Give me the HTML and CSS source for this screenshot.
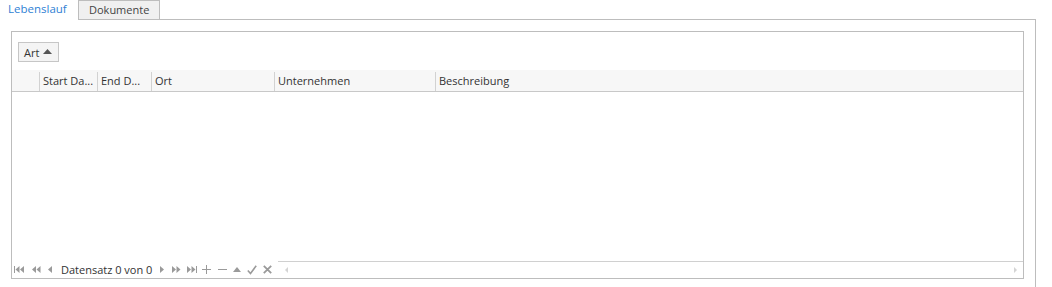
FILE: index.html
```html
<!DOCTYPE html>
<html>
<head>
<meta charset="utf-8">
<link rel="stylesheet" href="styles.css">
</head>
<body>
<div class="tabstrip">
  <div class="tab tab-active">Lebenslauf</div>
  <div class="tab tab-idle">Dokumente</div>
  <div class="tab-fill"></div>
</div>
<div class="panel">
  <div class="grid">
    <div class="grouppanel">
      <div class="groupbtn">Art <svg class="sortup" width="9" height="5" viewBox="0 0 9 5"><path d="M0 5 L4.5 0 L9 5 Z" fill="#555"/></svg></div>
    </div>
    <div class="header">
      <div class="col col-ind"></div>
      <div class="col col-start">Start Da...</div>
      <div class="col col-end">End D...</div>
      <div class="col col-ort">Ort</div>
      <div class="col col-unt">Unternehmen</div>
      <div class="col col-desc">Beschreibung</div>
    </div>
    <div class="body"></div>
    <div class="footer">
      <div class="nav">
        <svg class="ic ic-first" width="11" height="7" viewBox="0 0 11 7"><rect x="0" y="0" width="1" height="7" fill="#9a9a9a"/><path d="M1.5 3.5 L5.5 0 L5.5 7 Z M6 3.5 L10 0 L10 7 Z" fill="#9a9a9a"/></svg>
        <svg class="ic ic-prevpage" width="9" height="7" viewBox="0 0 9 7"><path d="M0 3.5 L4 0 L4 7 Z M4.5 3.5 L8.5 0 L8.5 7 Z" fill="#9a9a9a"/></svg>
        <svg class="ic ic-prev" width="4" height="7" viewBox="0 0 4 7"><path d="M0 3.5 L4 0 L4 7 Z" fill="#9a9a9a"/></svg>
        <span class="navtext">Datensatz 0 von 0</span>
        <svg class="ic ic-next" width="4" height="7" viewBox="0 0 4 7"><path d="M4 3.5 L0 0 L0 7 Z" fill="#9a9a9a"/></svg>
        <svg class="ic ic-nextpage" width="9" height="7" viewBox="0 0 9 7"><path d="M4 3.5 L0 0 L0 7 Z M8.5 3.5 L4.5 0 L4.5 7 Z" fill="#9a9a9a"/></svg>
        <svg class="ic ic-last" width="11" height="7" viewBox="0 0 11 7"><path d="M4 3.5 L0 0 L0 7 Z M8.5 3.5 L4.5 0 L4.5 7 Z" fill="#9a9a9a"/><rect x="9" y="0" width="1" height="7" fill="#9a9a9a"/></svg>
        <svg class="ic ic-plus" width="9" height="9" viewBox="0 0 9 9"><path d="M4.5 0 V9 M0 4.5 H9" stroke="#9a9a9a" stroke-width="1"/></svg>
        <svg class="ic ic-minus" width="9" height="9" viewBox="0 0 9 9"><path d="M0 4.5 H9" stroke="#9a9a9a" stroke-width="1"/></svg>
        <svg class="ic ic-up" width="8" height="5" viewBox="0 0 8 5"><path d="M0 5 L4 0 L8 5 Z" fill="#9a9a9a"/></svg>
        <svg class="ic ic-check" width="10" height="10" viewBox="0 0 10 10"><path d="M0.8 5.5 L3.5 8.5 L9.2 0.8" stroke="#9a9a9a" stroke-width="1.6" fill="none"/></svg>
        <svg class="ic ic-cancel" width="9" height="9" viewBox="0 0 9 9"><path d="M0.8 0.8 L8.2 8.2 M8.2 0.8 L0.8 8.2" stroke="#9a9a9a" stroke-width="1.8"/></svg>
      </div>
      <div class="hscroll">
        <svg class="sarrow" width="3" height="6" viewBox="0 0 3 6"><path d="M0 3 L3 0 L3 6 Z" fill="#d4d4d4"/></svg>
        <svg class="sarrow" width="3" height="6" viewBox="0 0 3 6"><path d="M3 3 L0 0 L0 6 Z" fill="#d4d4d4"/></svg>
      </div>
    </div>
  </div>
</div>
</body>
</html>
```

FILE: styles.css
```css
html, body {
  margin: 0;
  padding: 0;
  background: #ffffff;
}
body {
  font-family: "Open Sans", "Noto Sans", "Liberation Sans", sans-serif;
  font-size: 11px;
  color: #333333;
  width: 1052px;
  height: 287px;
  overflow: hidden;
}
.tabstrip {
  display: flex;
  width: 1036px;
  height: 20px;
}
.tab {
  box-sizing: border-box;
  height: 20px;
  line-height: 18px;
}
.tab-active {
  width: 78px;
  padding-left: 8px;
  color: #2f7fd4;
  font-size: 11.5px;
}
.tab-idle {
  width: 82px;
  padding-left: 10px;
  border: 1px solid #bdbdbd;
  background: #f0f0f0;
  color: #444444;
}
.tab-fill {
  flex: 1;
  border-bottom: 1px solid #bdbdbd;
}
.panel {
  box-sizing: border-box;
  width: 1036px;
  height: 267px;
  border-right: 1px solid #bdbdbd;
  padding: 11px 11px 0 11px;
}
.grid {
  box-sizing: border-box;
  width: 1013px;
  height: 248px;
  border: 1px solid #bdbdbd;
  display: flex;
  flex-direction: column;
}
.grouppanel {
  height: 38px;
  box-sizing: border-box;
  padding: 10px 0 0 6px;
}
.groupbtn {
  box-sizing: border-box;
  width: 41px;
  height: 20px;
  border: 1px solid #c6c6c6;
  background: #f4f4f4;
  display: flex;
  align-items: center;
  padding-left: 5px;
  color: #333333;
  gap: 4px;
}
.sortup {
  margin-top: -1px;
}
.header {
  display: flex;
  height: 22px;
  box-sizing: border-box;
  background: #f7f7f7;
  border-bottom: 1px solid #c8c8c8;
  padding-top: 2px;
}
.col {
  box-sizing: border-box;
  height: 19px;
  line-height: 18px;
  padding-left: 3px;
  border-left: 1px solid #d2d2d2;
  white-space: nowrap;
  overflow: hidden;
  color: #333333;
}
.col-ind { width: 27px; border-left: none; }
.col-start { width: 58px; }
.col-end { width: 54px; }
.col-ort { width: 123px; }
.col-unt { width: 161px; }
.col-desc { flex: 1; }
.body {
  flex: 1;
}
.footer {
  height: 17px;
  display: flex;
  align-items: stretch;
}
.nav {
  display: flex;
  align-items: center;
  padding-left: 2px;
  width: 264px;
  flex: none;
}
.ic { flex: none; }
.ic-first { margin-left: 0; }
.ic-prevpage { margin-left: 7px; }
.ic-prev { margin-left: 7px; }
.navtext {
  margin-left: 9px;
  color: #333333;
  white-space: nowrap;
}
.ic-next { margin-left: 8px; }
.ic-nextpage { margin-left: 8px; }
.ic-last { margin-left: 6px; }
.ic-plus { margin-left: 4px; }
.ic-minus { margin-left: 7px; }
.ic-up { margin-left: 6px; }
.ic-check { margin-left: 6px; }
.ic-cancel { margin-left: 6px; }
.hscroll {
  flex: 1;
  border-top: 1px solid #d0d0d0;
  display: flex;
  justify-content: space-between;
  align-items: center;
  padding: 0 6px 0 7px;
}
```
